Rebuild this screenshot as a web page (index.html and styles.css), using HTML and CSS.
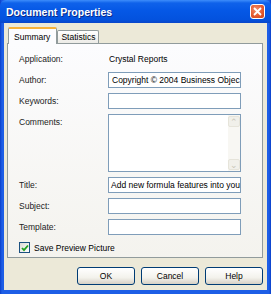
FILE: index.html
```html
<!DOCTYPE html>
<html lang="en">
  <head>
    <meta charset="UTF-8" />
    <title>Document Properties</title>
    <link rel="stylesheet" href="styles.css">
  </head>
  <body>
    <div class="window">
      <div class="titlebar">
        <span class="title">Document Properties</span>
        <span class="close">
          <svg width="9" height="9" viewBox="0 0 9 9">
            <path d="M1 1 L8 8 M8 1 L1 8" stroke="#fff" stroke-width="1.8" />
          </svg>
        </span>
      </div>

      <div class="client">
        <!-- Tabs -->
        <div class="tabs">
          <div class="tab active">Summary</div>
          <div class="tab">Statistics</div>
        </div>

        <div class="panel">
          <div class="row">
            <span class="label">Application:</span>
            <span class="value">Crystal Reports</span>
          </div>
          <div class="row">
            <span class="label">Author:</span>
            <div class="field"><span class="caret"></span>Copyright © 2004 Business Objec</div>
          </div>
          <div class="row">
            <span class="label">Keywords:</span>
            <div class="field"></div>
          </div>
          <div class="row top">
            <span class="label">Comments:</span>
            <div class="field memo">
              <div class="scrollbar">
                <span class="arrow">&#8963;</span>
                <span class="arrow">&#8964;</span>
              </div>
            </div>
          </div>
          <div class="row">
            <span class="label">Title:</span>
            <div class="field">Add new formula features into you</div>
          </div>
          <div class="row">
            <span class="label">Subject:</span>
            <div class="field"></div>
          </div>
          <div class="row">
            <span class="label">Template:</span>
            <div class="field"></div>
          </div>
          <div class="check-row">
            <span class="checkbox">
              <svg width="8" height="8" viewBox="0 0 8 8">
                <path d="M1 4 L3 6.2 L7 1.5" fill="none" stroke="#21a121" stroke-width="1.8" />
              </svg>
            </span>
            Save Preview Picture
          </div>
        </div>

        <!-- Dialog buttons -->
        <div class="buttons">
          <button class="btn">OK</button>
          <button class="btn">Cancel</button>
          <button class="btn">Help</button>
        </div>
      </div>
    </div>
  </body>
</html>
```

FILE: styles.css
```css
/* General styles */
body {
  margin: 0;
  padding: 0;
  font-family: "Liberation Sans", Arial, sans-serif;
  font-size: 8.5px;
  color: #000;
  background: #fff;
}

.window {
  width: 271px;
  height: 294px;
  box-sizing: border-box;
  display: flex;
  flex-direction: column;
  background: linear-gradient(to right, #0a3fc9, #1d5ee6 2px, #1d5ee6 269px, #0a3fc9);
}

/* Title bar */
.titlebar {
  height: 23px;
  flex-shrink: 0;
  display: flex;
  align-items: center;
  justify-content: space-between;
  padding: 0 6px 0 6px;
  background: linear-gradient(#3d8dfb 0, #0f62ea 3px, #0558e6 45%, #0352de 85%, #0a46c8 100%);
  border-radius: 6px 6px 0 0;
}

.title {
  color: #fff;
  font-weight: bold;
  font-size: 10.5px;
  text-shadow: 1px 1px 0 #0a2a8a;
  margin-top: 1px;
}

.close {
  width: 15px;
  height: 15px;
  box-sizing: border-box;
  border: 1px solid #fff;
  border-radius: 3px;
  background: radial-gradient(circle at 40% 35%, #f08f6d, #e2572d 60%, #c8431d);
  display: flex;
  align-items: center;
  justify-content: center;
}

/* Client area */
.client {
  flex: 1;
  margin: 0 4px 4px 4px;
  padding: 4px 4px 0 3px;
  background: #ece9d8;
  display: flex;
  flex-direction: column;
}

.tabs {
  height: 16px;
  display: flex;
  align-items: flex-end;
  padding-left: 1px;
}

.tab {
  height: 13px;
  box-sizing: border-box;
  border: 1px solid #919b9c;
  border-bottom: none;
  border-radius: 2px 2px 0 0;
  background: linear-gradient(#ffffff, #ecebe6);
  padding: 0 3px;
  display: flex;
  align-items: center;
}

.tab.active {
  height: 17px;
  margin-bottom: -1px;
  position: relative;
  z-index: 1;
  padding: 0 6px 0 5px;
  background: #fcfcfe;
  border-top: 2px solid #f7b23b;
}

.panel {
  height: 215px;
  box-sizing: border-box;
  border: 1px solid #919b9c;
  background: linear-gradient(#fcfcfe, #f4f3ee);
  padding: 7px 21px 0 11px;
  display: flex;
  flex-direction: column;
  gap: 5px;
}

.row {
  display: flex;
  align-items: center;
  min-height: 16px;
}

.row.top {
  align-items: flex-start;
}

.row.top .label {
  margin-top: 3px;
}

.label {
  width: 89px;
  flex-shrink: 0;
  color: #222;
}

.value {
  padding-left: 1px;
}

.field {
  flex: 1;
  height: 16px;
  box-sizing: border-box;
  border: 1px solid #7f9db9;
  background: #fff;
  padding: 0 2px;
  line-height: 14px;
  white-space: nowrap;
  overflow: hidden;
  display: flex;
  align-items: center;
}

.caret {
  width: 1px;
  height: 11px;
  background: #000;
  margin-right: 1px;
}

.field.memo {
  height: 58px;
  padding: 0;
  justify-content: flex-end;
  align-items: stretch;
}

.scrollbar {
  width: 12px;
  display: flex;
  flex-direction: column;
  justify-content: space-between;
  background: #f8f7f3;
  padding: 1px 0;
}

.arrow {
  height: 11px;
  box-sizing: border-box;
  border: 1px solid #e6e4da;
  border-radius: 2px;
  background: #f1f0ea;
  color: #c9c6b8;
  font-size: 9px;
  line-height: 11px;
  text-align: center;
  overflow: hidden;
}

.check-row {
  display: flex;
  align-items: center;
  margin-top: 2px;
}

.checkbox {
  width: 11px;
  height: 11px;
  box-sizing: border-box;
  border: 1px solid #1c5180;
  background: linear-gradient(135deg, #dcdbd5, #fff);
  display: flex;
  align-items: center;
  justify-content: center;
  margin-right: 4px;
}

/* Buttons */
.buttons {
  display: flex;
  justify-content: flex-end;
  gap: 6px;
  margin-top: 9px;
}

.btn {
  width: 58px;
  height: 18px;
  box-sizing: border-box;
  border: 1px solid #003c74;
  border-radius: 3px;
  background: linear-gradient(#ffffff, #f3f2ec 60%, #d6d0c5);
  font-family: "Liberation Sans", Arial, sans-serif;
  font-size: 8.5px;
  color: #000;
  padding: 0;
}
```
